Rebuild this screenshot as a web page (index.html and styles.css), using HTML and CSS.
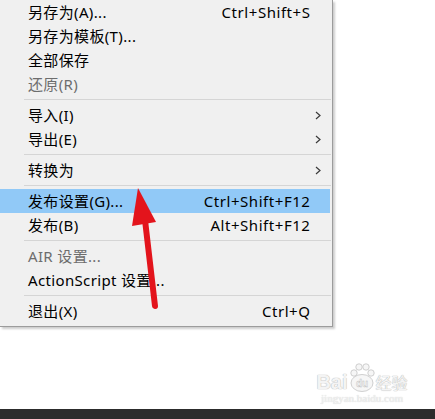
FILE: index.html
```html
<!DOCTYPE html>
<html lang="zh-CN">
<head>
<meta charset="utf-8">
<link rel="stylesheet" href="styles.css">
</head>
<body>
<div class="screen">
  <div class="menu">
    <div class="item"><span class="label">另存为(A)...</span><span class="key">Ctrl+Shift+S</span><span class="sub"></span></div>
    <div class="item"><span class="label">另存为模板(T)...</span><span class="key"></span><span class="sub"></span></div>
    <div class="item"><span class="label">全部保存</span><span class="key"></span><span class="sub"></span></div>
    <div class="item disabled"><span class="label">还原(R)</span><span class="key"></span><span class="sub"></span></div>
    <div class="sep"></div>
    <div class="item"><span class="label">导入(I)</span><span class="key"></span><span class="sub"><svg class="chev" width="6" height="9" viewBox="0 0 6 9"><polyline points="1,1 5,4.5 1,8"/></svg></span></div>
    <div class="item"><span class="label">导出(E)</span><span class="key"></span><span class="sub"><svg class="chev" width="6" height="9" viewBox="0 0 6 9"><polyline points="1,1 5,4.5 1,8"/></svg></span></div>
    <div class="sep"></div>
    <div class="item"><span class="label">转换为</span><span class="key"></span><span class="sub"><svg class="chev" width="6" height="9" viewBox="0 0 6 9"><polyline points="1,1 5,4.5 1,8"/></svg></span></div>
    <div class="sep"></div>
    <div class="item active"><span class="label">发布设置(G)...</span><span class="key">Ctrl+Shift+F12</span><span class="sub"></span></div>
    <div class="item"><span class="label">发布(B)</span><span class="key">Alt+Shift+F12</span><span class="sub"></span></div>
    <div class="sep"></div>
    <div class="item disabled"><span class="label">AIR 设置...</span><span class="key"></span><span class="sub"></span></div>
    <div class="item"><span class="label">ActionScript 设置...</span><span class="key"></span><span class="sub"></span></div>
    <div class="sep"></div>
    <div class="item"><span class="label">退出(X)</span><span class="key">Ctrl+Q</span><span class="sub"></span></div>
  </div>
  <div class="blank"></div>
  <div class="taskbar"></div>

  <svg class="arrow" width="435" height="419" viewBox="0 0 435 419">
    <line x1="145" y1="220" x2="155" y2="306" stroke="#e3141c" stroke-width="6" stroke-linecap="round"/>
    <polygon points="138,188 132,226 156,222" fill="#e3141c"/>
  </svg>

  <div class="watermark">
    <div class="wm-top">
      <span class="wm-bai">Bai</span>
      <svg class="wm-paw" width="26" height="30" viewBox="0 0 26 30">
        <circle cx="5" cy="11" r="3.2"/>
        <circle cx="10" cy="5" r="3.2"/>
        <circle cx="17" cy="5" r="3.2"/>
        <circle cx="22" cy="11" r="3.2"/>
        <ellipse cx="13" cy="21" rx="11" ry="8.5"/>
        <text x="13" y="25" text-anchor="middle">du</text>
      </svg>
      <span class="wm-cn">经验</span>
    </div>
    <div class="wm-url">jingyan.baidu.com</div>
  </div>
</div>
</body>
</html>
```

FILE: styles.css
```css
html, body {
  margin: 0;
  padding: 0;
  background: #ffffff;
}

.screen {
  position: relative;
  width: 435px;
  height: 419px;
  display: flex;
  flex-direction: column;
  overflow: hidden;
  font-family: "Noto Sans", "Noto Sans CJK SC", sans-serif;
}

.menu {
  width: 332px;
  background: #f0f0f0;
  border-right: 1px solid #9c9c9c;
  border-bottom: 1px solid #9c9c9c;
  box-shadow: 2px 2px 2px rgba(0, 0, 0, 0.2);
  padding-bottom: 3px;
  font-size: 15px;
  color: #000;
}

.item {
  display: grid;
  grid-template-columns: 1fr auto 20px;
  align-items: center;
  height: 24px;
  line-height: 24px;
  margin-right: 2px;
  padding-left: 28px;
  white-space: nowrap;
}

.label {
  letter-spacing: 0.35px;
}

.item.active {
  background: #91c9f7;
}

.item.disabled {
  color: #6d6d6d;
}

.key {
  text-align: right;
  letter-spacing: 0.55px;
  margin-right: -0.5px;
}

.sub {
  display: flex;
  align-items: center;
  padding-left: 5px;
}

.chev polyline {
  fill: none;
  stroke: #3a3a3a;
  stroke-width: 1.2;
}

.sep {
  height: 1px;
  background: #d5d5d5;
  margin: 3px 1px 3px 24px;
}

.blank {
  flex: 1;
}

.taskbar {
  height: 10px;
  background: #2c2c2c;
}

.arrow {
  position: absolute;
  left: 0;
  top: 0;
  pointer-events: none;
}

.watermark {
  position: absolute;
  left: 316px;
  top: 362px;
  width: 92px;
  display: flex;
  flex-direction: column;
  align-items: center;
  color: #ffffff;
}

.wm-top {
  display: flex;
  align-items: flex-end;
  gap: 1px;
}

.wm-bai {
  font-family: "Liberation Sans", sans-serif;
  font-weight: bold;
  font-size: 20px;
  line-height: 20px;
  color: #f4f4f4;
  text-shadow: 0 0 1px #b8b8b8, 0 0 1px #b8b8b8;
}

.wm-paw circle,
.wm-paw ellipse {
  fill: #f6f6f6;
  stroke: #c4c4c4;
  stroke-width: 0.8;
}

.wm-paw text {
  font-family: "Liberation Sans", sans-serif;
  font-size: 10px;
  font-weight: bold;
  fill: #f4f4f4;
  stroke: #bdbdbd;
  stroke-width: 0.4;
}

.wm-cn {
  font-family: "Noto Sans CJK SC", sans-serif;
  font-size: 16px;
  line-height: 20px;
  color: #f4f4f4;
  text-shadow: 0 0 1px #b8b8b8, 0 0 1px #b8b8b8;
}

.wm-url {
  font-family: "Liberation Serif", serif;
  font-size: 11px;
  line-height: 13px;
  color: #f2f2f2;
  text-shadow: 0 0 1px #c4c4c4;
}
```
